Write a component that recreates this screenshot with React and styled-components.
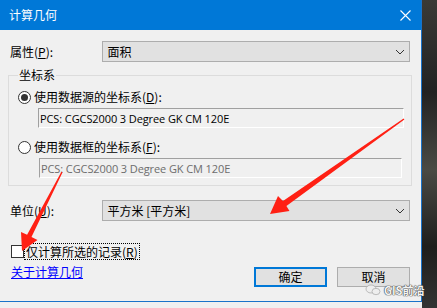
import React from 'react'
import styled, { createGlobalStyle } from 'styled-components'

const GlobalStyle = createGlobalStyle`
  html, body {
    margin: 0;
    padding: 0;
    background: #f0f0f0;
    overflow: hidden;
  }
  body {
    font-family: "Noto Sans CJK SC", "Noto Sans", sans-serif;
    font-size: 12px;
    color: #000;
  }
`

const Page = styled.div`
  position: relative;
  display: flex;
  width: 437px;
  height: 308px;
`

const LeftColumn = styled.div`
  width: 422px;
  display: flex;
  flex-direction: column;
`

const Dialog = styled.div`
  height: 301px;
  display: flex;
  flex-direction: column;
  background: #f0f0f0;
  border-right: 1px solid #1a73c9;
  border-bottom: 1px solid #1a73c9;
`

const TitleBar = styled.div`
  height: 30px;
  flex-shrink: 0;
  display: flex;
  align-items: center;
  justify-content: space-between;
  padding: 0 10px 0 9px;
  background: #0078d7;
  color: #fff;
  font-size: 12px;
  line-height: 16px;
`

const DialogBody = styled.div`
  padding: 11px 11px 0 10px;
  display: flex;
  flex-direction: column;
`

const FieldRow = styled.div`
  display: flex;
  align-items: center;
  margin-top: ${(p) => p.$top || 0}px;
`

const FieldLabel = styled.span`
  width: 92px;
  line-height: 16px;
  white-space: nowrap;
`

const ComboBox = styled.div`
  width: 310px;
  height: 21px;
  box-sizing: border-box;
  border: 1px solid #adadad;
  background: #e1e1e1;
  display: flex;
  align-items: center;
  justify-content: space-between;
  padding: 0 4px 0 5px;
  line-height: 16px;
`

const GroupBox = styled.fieldset`
  margin: 5px 0 0 -2px;
  width: 404px;
  box-sizing: border-box;
  border: 1px solid #dcdcdc;
  padding: 6px 0 7px 9px;
`

const GroupLegend = styled.legend`
  padding: 0 1px;
  line-height: 16px;
`

const RadioRow = styled.div`
  display: flex;
  align-items: center;
  height: 16px;
  margin-top: ${(p) => p.$top || 0}px;
  line-height: 16px;
`

const Radio = styled.span`
  width: 13px;
  height: 13px;
  box-sizing: border-box;
  border-radius: 50%;
  border: 1px solid #333;
  background: #fff;
  display: flex;
  align-items: center;
  justify-content: center;
  margin-right: 3px;

  &::after {
    content: '';
    width: 7px;
    height: 7px;
    border-radius: 50%;
    background: ${(p) => (p.$checked ? '#333' : 'transparent')};
  }
`

const TextBox = styled.div`
  margin: ${(p) => p.$top}px 0 0 ${(p) => p.$left}px;
  width: ${(p) => p.$width}px;
  height: 20px;
  box-sizing: border-box;
  border: 1px solid;
  border-color: #a0a0a0 #fff #fff #a0a0a0;
  padding-left: 1px;
  display: flex;
  align-items: center;
  font-family: "Open Sans", "Noto Sans", sans-serif;
  font-size: 11px;
  letter-spacing: -0.1px;
  color: ${(p) => (p.$disabled ? '#6d6d6d' : '#000')};
`

const CheckRow = styled.div`
  display: flex;
  align-items: center;
  margin: 22px 0 0 1px;
  height: 17px;
`

const CheckBox = styled.span`
  width: 13px;
  height: 13px;
  box-sizing: border-box;
  border: 1px solid #333;
  background: #fff;
`

const FocusLabel = styled.span`
  border: 1px dotted #000;
  padding: 0 1px;
  line-height: 15px;
`

const Footer = styled.div`
  display: flex;
  align-items: flex-start;
  justify-content: space-between;
  margin-top: 4px;
`

const HelpLink = styled.a`
  margin-left: 1px;
  color: #0000ff;
  text-decoration: underline;
  line-height: 16px;
`

const ButtonBar = styled.div`
  display: flex;
  gap: 10px;
  margin-top: 3px;
`

const Button = styled.div`
  width: 73px;
  height: 20px;
  box-sizing: border-box;
  border: ${(p) => (p.$primary ? '2px solid #0078d7' : '1px solid #adadad')};
  background: #e1e1e1;
  display: flex;
  align-items: center;
  justify-content: center;
  line-height: 16px;
`

const Backdrop = styled.div`
  flex: 1;
  background: linear-gradient(180deg, #3a3a36 0%, #222 30%, #4a4a44 55%, #1e1e1c 80%, #333 100%);
`

const Annotations = styled.svg`
  position: absolute;
  left: 0;
  top: 0;
  pointer-events: none;
`

const Watermark = styled.div`
  position: absolute;
  left: 365px;
  top: 283px;
  display: flex;
  align-items: center;
  gap: 3px;
  font-family: "Noto Sans CJK SC", "Noto Sans", sans-serif;
  font-size: 11px;
  font-weight: bold;
  color: #f4f4f4;
  text-shadow: 0 0 1px #444, 0 0 1px #444, 0 0 1px #444;
  line-height: 14px;
`

const Chevron = () => (
  <svg width="10" height="6" viewBox="0 0 10 6">
    <path d="M1 1 L5 5 L9 1" fill="none" stroke="#333" strokeWidth="1" />
  </svg>
)

const CloseIcon = () => (
  <svg width="11" height="11" viewBox="0 0 11 11">
    <path d="M0.5 0.5 L10.5 10.5 M10.5 0.5 L0.5 10.5" stroke="#fff" strokeWidth="1.1" />
  </svg>
)

const WeChatIcon = () => (
  <svg width="16" height="12" viewBox="0 0 16 12">
    <ellipse cx="6" cy="5" rx="5" ry="4" fill="#eee" stroke="#999" strokeWidth="0.6" />
    <ellipse cx="11" cy="7.5" rx="4" ry="3.2" fill="#eee" stroke="#999" strokeWidth="0.6" />
  </svg>
)

const App = () => {
  return (
    <>
      <GlobalStyle />
      <Page>
        <LeftColumn>
          <Dialog>
            <TitleBar>
              <span>计算几何</span>
              <CloseIcon />
            </TitleBar>

            <DialogBody>
              <FieldRow>
                <FieldLabel>
                  属性(<u>P</u>):
                </FieldLabel>
                <ComboBox>
                  <span>面积</span>
                  <Chevron />
                </ComboBox>
              </FieldRow>

              <GroupBox>
                <GroupLegend>坐标系</GroupLegend>
                <RadioRow>
                  <Radio $checked />
                  <span>
                    使用数据源的坐标系(<u>D</u>):
                  </span>
                </RadioRow>
                <TextBox $top={3} $left={20} $width={366}>
                  PCS: CGCS2000 3 Degree GK CM 120E
                </TextBox>
                <RadioRow $top={11}>
                  <Radio />
                  <span>
                    使用数据框的坐标系(<u>F</u>):
                  </span>
                </RadioRow>
                <TextBox $top={3} $left={21} $width={363} $disabled>
                  PCS: CGCS2000 3 Degree GK CM 120E
                </TextBox>
              </GroupBox>

              <FieldRow $top={14}>
                <FieldLabel>
                  单位(<u>U</u>):
                </FieldLabel>
                <ComboBox>
                  <span>平方米 [平方米]</span>
                  <Chevron />
                </ComboBox>
              </FieldRow>

              <CheckRow>
                <CheckBox />
                <FocusLabel>
                  仅计算所选的记录(<u>R</u>)
                </FocusLabel>
              </CheckRow>

              <Footer>
                <HelpLink>关于计算几何</HelpLink>
                <ButtonBar>
                  <Button $primary>确定</Button>
                  <Button>取消</Button>
                </ButtonBar>
              </Footer>
            </DialogBody>
          </Dialog>
        </LeftColumn>
        <Backdrop />

        <Annotations width="437" height="308" viewBox="0 0 437 308">
          <polygon
            fill="#ff2014"
            points="403.6,118.4 283,201.1 278,196 270,214 289.5,211 286.4,206.1 404.4,119.6"
          />
          <polygon
            fill="#ff2014"
            points="61.4,171.7 27.1,234.7 21,232 22,251 37.5,240 31.5,236.9 62.6,172.3"
          />
        </Annotations>

        <Watermark>
          <WeChatIcon />
          <span>GIS前沿</span>
        </Watermark>
      </Page>
    </>
  )
}

export default App
